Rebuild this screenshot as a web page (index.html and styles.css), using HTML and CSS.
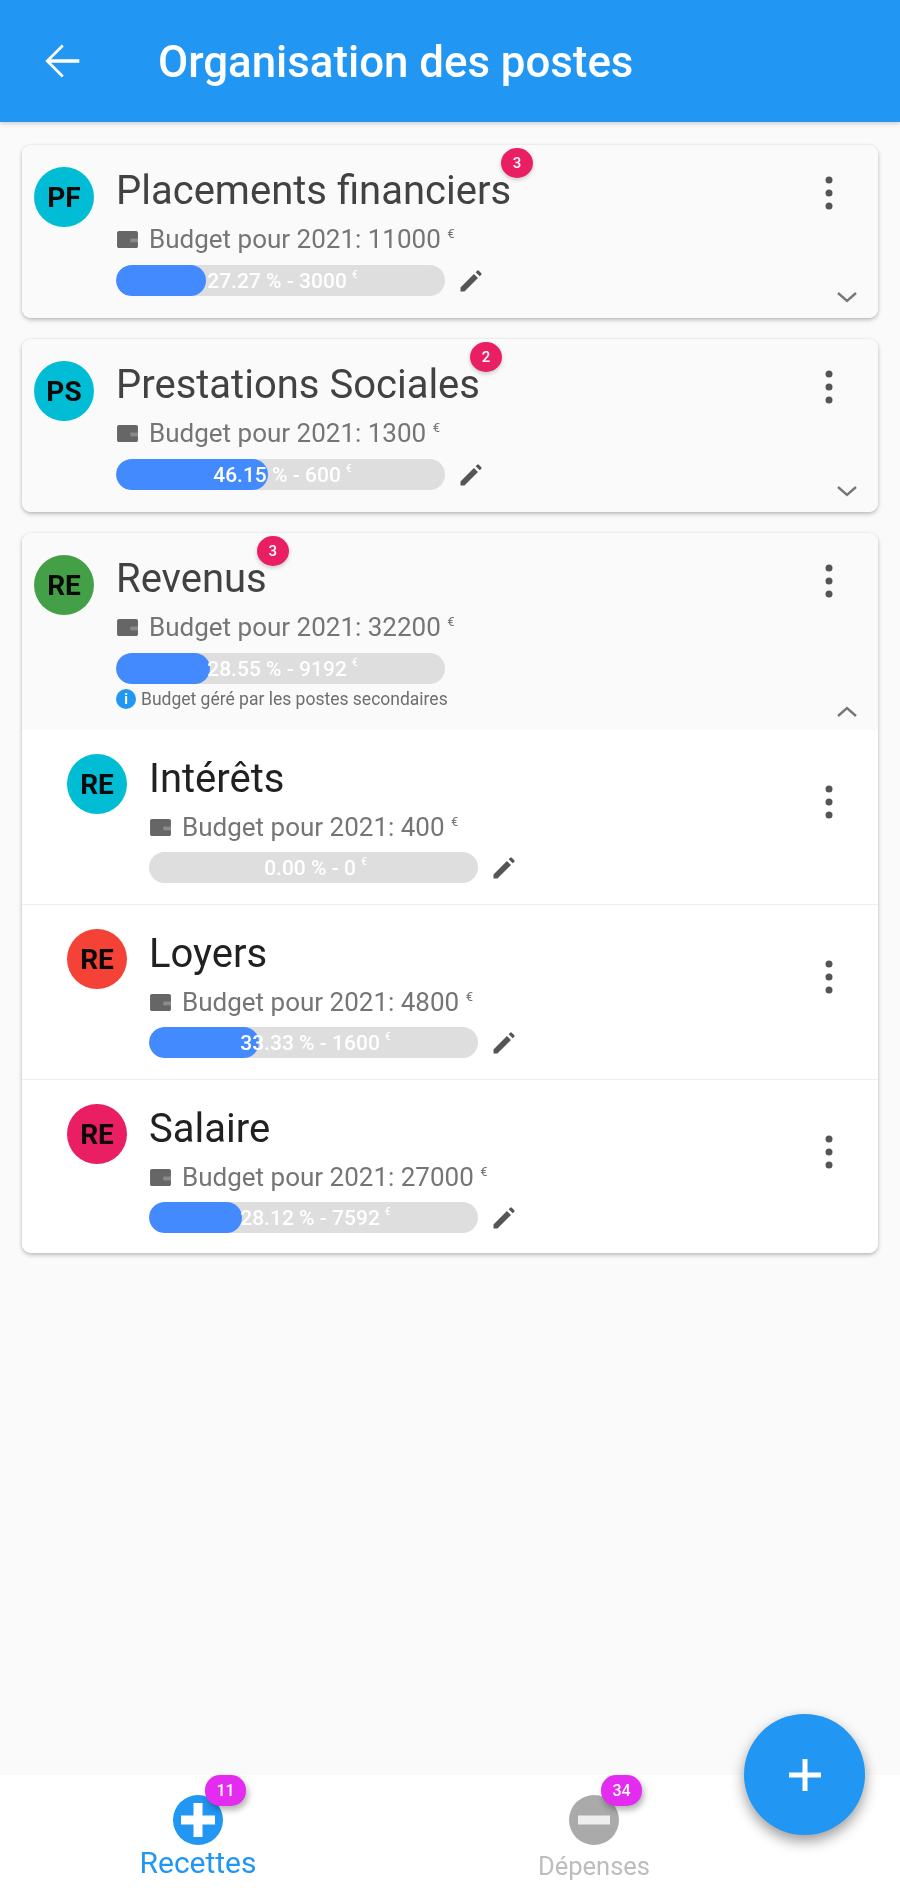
FILE: index.html
```html
<!DOCTYPE html>
<html lang="fr">
<head>
<meta charset="utf-8">
<title>Organisation des postes</title>
<link rel="stylesheet" href="styles.css">
</head>
<body>
<svg class="defs" width="0" height="0" aria-hidden="true">
  <symbol id="i-wallet" viewBox="0 0 24 20"><path d="M1 3c0-1.100.9-2 2-2h18c1.100 0 2 .9 2 2v14c0 1.100-.9 2-2 2H3c-1.100 0-2-.9-2-2z"/><rect x="15" y="9" width="8" height="4" fill="#fafafa" opacity=".25"/></symbol>
  <symbol id="i-edit" viewBox="0 0 24 24"><path d="M3 21v-3.400L14.500 6l3.500 3.500L6.400 21zM16 4.500l1.300-1.300a1 1 0 0 1 1.400 0l2.100 2.100a1 1 0 0 1 0 1.400L19.500 8z"/></symbol>
  <symbol id="i-more" viewBox="0 0 8 40"><circle cx="4" cy="7" r="3.500"/><circle cx="4" cy="20" r="3.500"/><circle cx="4" cy="33" r="3.500"/></symbol>
</svg>
<div class="app">
  <header class="appbar">
    <svg class="back" viewBox="0 0 24 24" aria-hidden="true"><path d="M20 11.200H6.900l5.900-5.900L11.900 4.400 4.300 12l7.600 7.600.9-.9-5.900-5.900H20z"/></svg>
    <h1 class="appbar-title">Organisation des postes</h1>
  </header>

  <main class="content">
    <section class="card">
      <div class="row parent">
        <div class="avatar cyan">PF</div>
        <div class="info">
          <div class="title"><span class="name">Placements financiers<span class="badge">3</span></span></div>
          <div class="budget"><svg class="wallet"><use href="#i-wallet"/></svg>Budget pour 2021: 11000 <sup>€</sup></div>
          <div class="bar-line">
            <div class="bar"><div class="fill" style="width:27.27%"></div><div class="bar-text">27.27 % - 3000 <sup>€</sup></div></div>
            <svg class="edit"><use href="#i-edit"/></svg>
          </div>
        </div>
        <div class="actions">
          <svg class="more"><use href="#i-more"/></svg>
          <svg class="chevron" viewBox="0 0 24 14"><path d="M3 3l9 8 9-8"/></svg>
        </div>
      </div>
    </section>

    <section class="card">
      <div class="row parent">
        <div class="avatar cyan">PS</div>
        <div class="info">
          <div class="title"><span class="name">Prestations Sociales<span class="badge">2</span></span></div>
          <div class="budget"><svg class="wallet"><use href="#i-wallet"/></svg>Budget pour 2021: 1300 <sup>€</sup></div>
          <div class="bar-line">
            <div class="bar"><div class="fill" style="width:46.15%"></div><div class="bar-text">46.15 % - 600 <sup>€</sup></div></div>
            <svg class="edit"><use href="#i-edit"/></svg>
          </div>
        </div>
        <div class="actions">
          <svg class="more"><use href="#i-more"/></svg>
          <svg class="chevron" viewBox="0 0 24 14"><path d="M3 3l9 8 9-8"/></svg>
        </div>
      </div>
    </section>

    <section class="card">
      <div class="row parent expanded">
        <div class="avatar green">RE</div>
        <div class="info">
          <div class="title"><span class="name">Revenus<span class="badge">3</span></span></div>
          <div class="budget"><svg class="wallet"><use href="#i-wallet"/></svg>Budget pour 2021: 32200 <sup>€</sup></div>
          <div class="bar-line">
            <div class="bar"><div class="fill" style="width:28.55%"></div><div class="bar-text">28.55 % - 9192 <sup>€</sup></div></div>
          </div>
          <div class="note"><span class="note-icon">i</span>Budget géré par les postes secondaires</div>
        </div>
        <div class="actions">
          <svg class="more"><use href="#i-more"/></svg>
          <svg class="chevron" viewBox="0 0 24 14"><path d="M3 11l9-8 9 8"/></svg>
        </div>
      </div>

      <div class="row child">
        <div class="avatar cyan">RE</div>
        <div class="info">
          <div class="title"><span class="name">Intérêts</span></div>
          <div class="budget"><svg class="wallet"><use href="#i-wallet"/></svg>Budget pour 2021: 400 <sup>€</sup></div>
          <div class="bar-line">
            <div class="bar"><div class="bar-text">0.00 % - 0 <sup>€</sup></div></div>
            <svg class="edit"><use href="#i-edit"/></svg>
          </div>
        </div>
        <div class="actions"><svg class="more"><use href="#i-more"/></svg></div>
      </div>

      <div class="row child">
        <div class="avatar red">RE</div>
        <div class="info">
          <div class="title"><span class="name">Loyers</span></div>
          <div class="budget"><svg class="wallet"><use href="#i-wallet"/></svg>Budget pour 2021: 4800 <sup>€</sup></div>
          <div class="bar-line">
            <div class="bar"><div class="fill" style="width:33.33%"></div><div class="bar-text">33.33 % - 1600 <sup>€</sup></div></div>
            <svg class="edit"><use href="#i-edit"/></svg>
          </div>
        </div>
        <div class="actions"><svg class="more"><use href="#i-more"/></svg></div>
      </div>

      <div class="row child last">
        <div class="avatar pink">RE</div>
        <div class="info">
          <div class="title"><span class="name">Salaire</span></div>
          <div class="budget"><svg class="wallet"><use href="#i-wallet"/></svg>Budget pour 2021: 27000 <sup>€</sup></div>
          <div class="bar-line">
            <div class="bar"><div class="fill" style="width:28.12%"></div><div class="bar-text">28.12 % - 7592 <sup>€</sup></div></div>
            <svg class="edit"><use href="#i-edit"/></svg>
          </div>
        </div>
        <div class="actions"><svg class="more"><use href="#i-more"/></svg></div>
      </div>
    </section>
  </main>

  <nav class="tabs">
    <div class="tab active">
      <div class="tab-icon">
        <svg viewBox="0 0 50 50" aria-hidden="true"><circle cx="25" cy="25" r="25"/><path class="glyph" d="M20.500 8h9v12.500H42v9H29.500V42h-9V29.500H8v-9h12.500z"/></svg>
        <span class="tab-badge">11</span>
      </div>
      <div class="tab-label">Recettes</div>
    </div>
    <div class="tab">
      <div class="tab-icon">
        <svg viewBox="0 0 50 50" aria-hidden="true"><circle cx="25" cy="25" r="25"/><path class="glyph" d="M9 20.500h32v9H9z"/></svg>
        <span class="tab-badge">34</span>
      </div>
      <div class="tab-label">Dépenses</div>
    </div>
  </nav>

  <button class="fab" type="button" aria-label="Ajouter">
    <svg viewBox="0 0 32 32" aria-hidden="true"><path d="M13.500 0h5v13.500H32v5H18.500V32h-5V18.500H0v-5h13.500z"/></svg>
  </button>
</div>
</body>
</html>
```

FILE: styles.css
```css
* { box-sizing: border-box; }
html, body { margin: 0; padding: 0; }
body { font-family: Roboto, "Liberation Sans", sans-serif; background: #fafafa; }
.defs { position: absolute; }

.app { position: relative; width: 900px; height: 1896px; display: flex; flex-direction: column; overflow: hidden; background: #fafafa; filter: blur(.7px); }

.appbar { height: 122px; flex: none; background: #2196f3; display: flex; align-items: center; padding-left: 36px; gap: 70px; box-shadow: 0 2px 4px rgba(0,0,0,.16); position: relative; z-index: 2; }
.back { width: 52px; height: 52px; fill: #fff; flex: none; margin-top: 0; }
.appbar-title { margin: 0; color: #fff; font-size: 43.800px; font-weight: 500; line-height: 50px; margin-top: 2px; }

.content { flex: 1; padding: 23px 22px 0; display: flex; flex-direction: column; gap: 21px; }

.card { background: #fff; border-radius: 9px; box-shadow: 0 2px 4px rgba(0,0,0,.25), 0 0 2px rgba(0,0,0,.08); overflow: hidden; flex: none; }

.row { display: flex; align-items: stretch; }
.parent { background: #fafafa; padding: 26px 0 22px 12px; gap: 22px; }
.parent.expanded { padding-bottom: 0; height: 197px; }
.child { background: #fff; padding: 29px 0 22px 45px; gap: 22px; height: 175px; border-bottom: 1px solid #eee; }
.child.last { border-bottom: 0; height: 173px; }

.avatar { width: 60px; height: 60px; margin-top: -4px; border-radius: 50%; flex: none; display: flex; align-items: center; justify-content: center; color: #0a0a0a; font-size: 28px; font-weight: 700; }
.child .avatar { margin-top: -5px; }
.cyan { background: #00bcd4; }
.green { background: #43a047; }
.red { background: #f44336; }
.pink { background: #e91e63; }

.info { flex: 1; min-width: 0; }
.title { height: 40px; display: flex; align-items: center; }
.name { position: relative; font-size: 40px; line-height: 40px; color: #424242; white-space: nowrap; }
.child .name { color: #212121; }

.badge { position: absolute; right: -22px; top: -23px; width: 32px; height: 30px; border-radius: 50%; background: #e91e63; color: #fff; font-size: 15px; font-weight: 500; line-height: 30px; text-align: center; box-shadow: 0 2px 4px rgba(0,0,0,.2); }

.budget { margin-top: 13px; height: 30px; display: flex; align-items: center; color: #757575; font-size: 26px; white-space: pre; }
.budget sup { font-size: 13px; align-self: flex-start; line-height: 20px; }
.wallet { width: 23px; height: 19px; fill: #666; margin-right: 10px; flex: none; }

.bar-line { margin-top: 11px; display: flex; align-items: center; gap: 12px; }
.child .bar-line { margin-top: 10px; }
.bar { position: relative; width: 329px; height: 31px; border-radius: 16px; background: #dedede; overflow: hidden; flex: none; }
.fill { height: 100%; background: #448aff; border-radius: 16px; }
.bar-text { position: absolute; inset: 0; display: flex; align-items: center; justify-content: center; padding-left: 4px; color: #fff; font-size: 21px; font-weight: 500; white-space: pre; }
.bar-text sup { font-size: 10px; align-self: flex-start; line-height: 20px; }
.edit { width: 28px; height: 28px; fill: #555; flex: none; }

.note { margin-top: 5px; height: 20px; display: flex; align-items: center; color: #6e6e6e; font-size: 17.500px; white-space: nowrap; }
.note-icon { width: 20px; height: 20px; border-radius: 50%; background: #2196f3; color: #fff; font-size: 14px; font-weight: 700; line-height: 20px; text-align: center; margin-right: 5px; flex: none; }

.actions { width: 110px; flex: none; display: flex; flex-direction: column; align-items: flex-end; justify-content: space-between; }
.more { width: 8px; height: 40px; fill: #555; margin-right: 45px; margin-top: 2px; flex: none; }
.chevron { width: 24px; height: 14px; fill: none; stroke: #777; stroke-width: 2.400; margin-right: 19px; flex: none; }
.parent .chevron { margin-bottom: -8px; }
.parent.expanded .chevron { margin-bottom: 11px; }
.child .actions { padding-top: 21px; }

.tabs { height: 121px; flex: none; background: #fff; padding-right: 108px; display: flex; }
.tab { flex: 1; display: flex; flex-direction: column; align-items: center; padding-top: 20px; color: #bdbdbd; }
.tab-icon { position: relative; width: 50px; height: 50px; }
.tab-icon svg { display: block; width: 50px; height: 50px; fill: #aaa; }
.tab-icon .glyph { fill: #fff; opacity: .8; }
.tab-badge { position: absolute; left: 32px; top: -20px; width: 41px; height: 31px; border-radius: 15px; background: #e32cf0; color: #fff; font-size: 16px; font-weight: 500; line-height: 31px; text-align: center; box-shadow: 2px 4px 6px rgba(0,0,0,.3); }
.tab-label { margin-top: 3px; font-size: 25.500px; line-height: 36px; }
.active { color: #2196f3; }
.active .tab-icon svg { fill: #2196f3; }
.active .tab-icon .glyph { opacity: 1; }
.active .tab-label { font-size: 30px; margin-top: 0; }

.fab { position: absolute; left: 744px; top: 1714px; width: 121px; height: 121px; padding: 0; border: 0; border-radius: 50%; background: #2196f3; display: flex; align-items: center; justify-content: center; box-shadow: 0 6px 14px rgba(0,0,0,.4); }
.fab svg { width: 32px; height: 32px; fill: #fff; }
```
